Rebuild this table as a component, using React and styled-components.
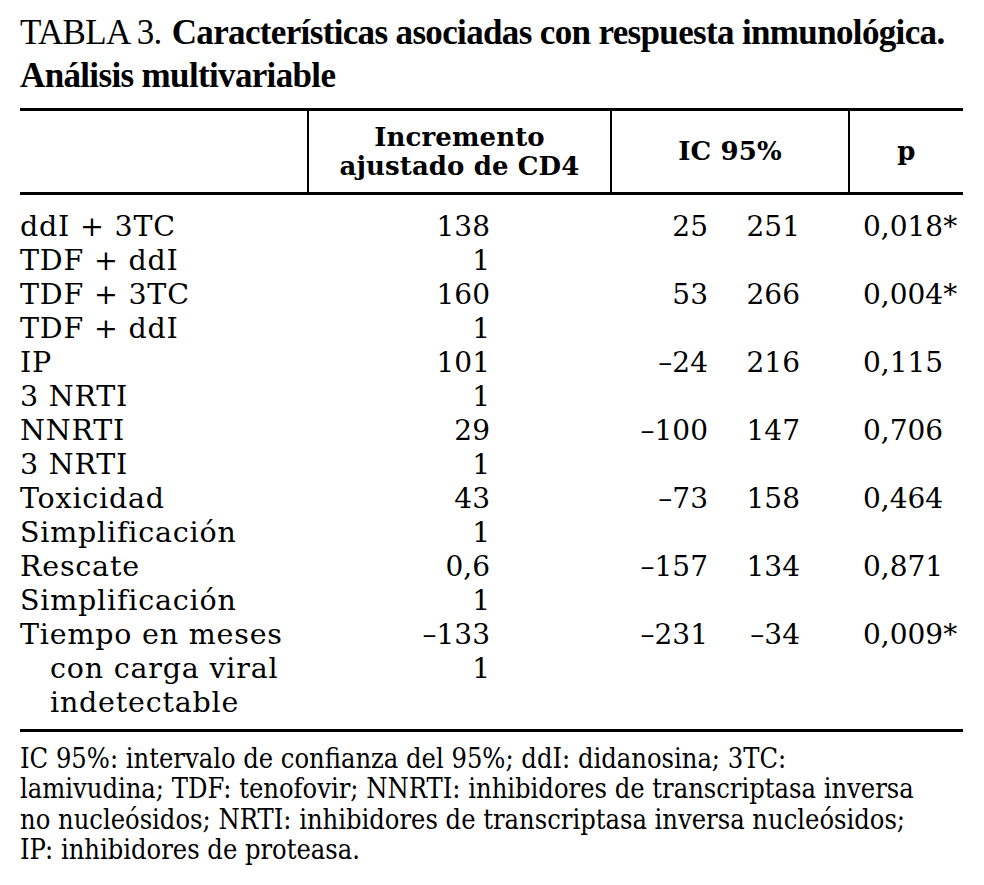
import React from "react";
import styled, { createGlobalStyle } from "styled-components";

const Global = createGlobalStyle`
  html, body { margin: 0; padding: 0; background: #fff; }
  body { color: #000; }
`;

const Page = styled.div`
  width: 984px;
  padding: 11px 21px 0 20px;
  box-sizing: border-box;
`;

const Title = styled.h1`
  margin: 0;
  font-family: "Liberation Serif", "Times New Roman", serif;
  font-weight: 700;
  font-size: 35px;
  line-height: 43px;
  letter-spacing: -0.65px;
`;

const Label = styled.span`
  font-weight: 400;
  margin-right: 10px;
`;

const Table = styled.div`
  margin-top: 11px;
  border-top: 3px solid #000;
  border-bottom: 3px solid #000;
  font-family: "DejaVu Serif", "Liberation Serif", serif;
`;

const HeadRow = styled.div`
  display: grid;
  grid-template-columns: 287px 303px 238px 1fr;
  height: 81px;
  border-bottom: 3px solid #000;
`;

const HeadCell = styled.div`
  display: flex;
  align-items: center;
  justify-content: center;
  text-align: center;
  font-weight: 700;
  font-size: 26px;
  line-height: 29px;
  letter-spacing: 0.1px;
  border-left: ${(p) => (p.$first ? "none" : "2px solid #000")};
`;

const Body = styled.div`
  padding: 15px 0 9px;
`;

const Row = styled.div`
  display: grid;
  grid-template-columns: 287px 183px 218px 92px 63px 1fr;
  font-size: 28px;
  line-height: 34px;
  height: 34px;
  white-space: nowrap;
`;

const Name = styled.div`
  padding-left: ${(p) => (p.$indent ? "30px" : "0")};
  font-size: 28.5px;
  letter-spacing: 0.8px;
`;

const Num = styled.div`
  text-align: right;
`;

const P = styled.div`
  text-align: left;
`;

const Notes = styled.p`
  margin: 0;
  padding-top: 12px;
  font-family: "DejaVu Serif", "Liberation Serif", serif;
  font-stretch: condensed;
  font-size: 27px;
  line-height: 30.3px;
  white-space: nowrap;
`;

const rows = [
  ["ddI + 3TC", "138", "25", "251", "0,018*"],
  ["TDF + ddI", "1"],
  ["TDF + 3TC", "160", "53", "266", "0,004*"],
  ["TDF + ddI", "1"],
  ["IP", "101", "–24", "216", "0,115"],
  ["3 NRTI", "1"],
  ["NNRTI", "29", "–100", "147", "0,706"],
  ["3 NRTI", "1"],
  ["Toxicidad", "43", "–73", "158", "0,464"],
  ["Simplificación", "1"],
  ["Rescate", "0,6", "–157", "134", "0,871"],
  ["Simplificación", "1"],
  ["Tiempo en meses", "–133", "–231", "–34", "0,009*"],
  ["con carga viral", "1", "", "", "", true],
  ["indetectable", "", "", "", "", true],
];

export default function App() {
  return (
    <Page>
      <Global />
      <Title>
        <Label>TABLA 3.</Label>
        Características asociadas con respuesta inmunológica. Análisis multivariable
      </Title>
      <Table>
        <HeadRow>
          <HeadCell $first />
          <HeadCell>
            Incremento
            <br />
            ajustado de CD4
          </HeadCell>
          <HeadCell>IC 95%</HeadCell>
          <HeadCell>p</HeadCell>
        </HeadRow>
        <Body>
          {rows.map(([name, v, lo, hi, p, indent], i) => (
            <Row key={i}>
              <Name $indent={indent}>{name}</Name>
              <Num>{v}</Num>
              <Num>{lo}</Num>
              <Num>{hi}</Num>
              <div />
              <P>{p}</P>
            </Row>
          ))}
        </Body>
      </Table>
      <Notes>
        IC 95%: intervalo de confianza del 95%; ddI: didanosina; 3TC:
        <br />
        lamivudina; TDF: tenofovir; NNRTI: inhibidores de transcriptasa inversa
        <br />
        no nucleósidos; NRTI: inhibidores de transcriptasa inversa nucleósidos;
        <br />
        IP: inhibidores de proteasa.
      </Notes>
    </Page>
  );
}
